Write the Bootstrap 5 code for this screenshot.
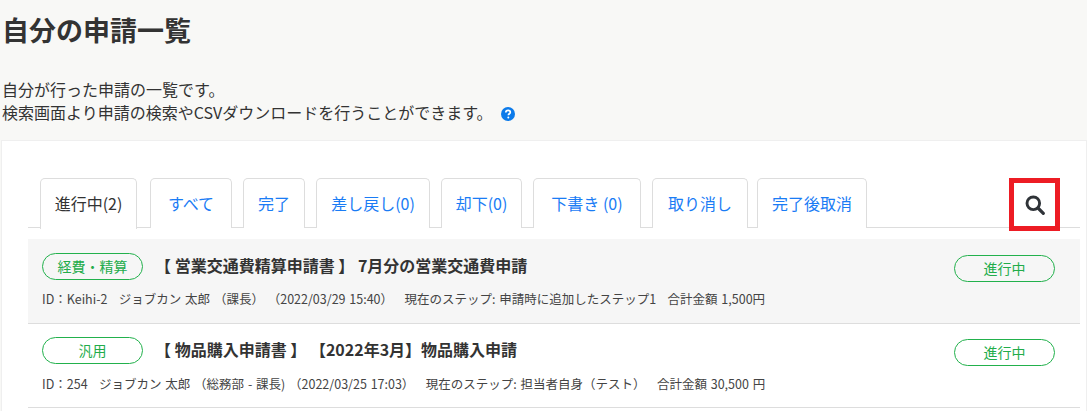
<!DOCTYPE html>
<html lang="ja">
<head>
<meta charset="UTF-8">
<meta name="viewport" content="width=device-width, initial-scale=1">
<link rel="stylesheet" href="https://cdn.jsdelivr.net/npm/bootstrap@5.3.0/dist/css/bootstrap.min.css">
<style>
    body {
        background: #f8f8f6;
        color: #333;
        font-family: "Noto Sans CJK JP", "Noto Sans", sans-serif;
        font-size: 16px;
        text-spacing-trim: space-all;
        overflow: hidden;
    }
    .page-title { font-size: 27px; font-weight: 700; line-height: 38px; margin: 0; padding: 11px 0 0 2px; }
    .page-desc { line-height: 23px; margin: 0; padding: 29px 0 16px 2px; }
    .help-icon { margin-left: 5px; vertical-align: -2px; }
    .panel { background: #fff; border: 1px solid #efefef; border-bottom: 0; margin-left: 1px; height: 271px; padding: 37px 6px 0 26px; }
    .tab-row { position: relative; border-bottom: 1px solid #ddd; height: 50px; padding-left: 12px; gap: 11px; }
    .tab-item {
        display: block; height: 50px; line-height: 48px; text-align: center;
        border: 1px solid #ddd; border-bottom: 0; border-radius: 5px 5px 0 0;
        background: #fff; color: #1a7cf5; text-decoration: none;
    }
    .tab-item.is-current { color: #333; height: 51px; position: relative; margin-bottom: -1px; }
    .t1 { width: 97px; margin-right: 2px; } .t2 { width: 82px; } .t3 { width: 62px; } .t4 { width: 114px; }
    .t5 { width: 81px; } .t6 { width: 108px; } .t7 { width: 96px; } .t8 { width: 110px; margin-left: -2px; }
    .search-box {
        position: absolute; right: 20px; top: 0; width: 51px; height: 53px;
        border: 5px solid #ed1c24; background: #fff;
    }
    .req-list { margin-top: 11px; }
    .req-row { height: 84px; border-bottom: 1px solid #ddd; padding: 13px 25px 0 14px; }
    .req-row.is-shaded { height: 85px; padding-top: 14px; background: #f6f6f6; }
    .pill {
        display: block; height: 27px; line-height: 24px; text-align: center;
        border: 1px solid #22b14c; border-radius: 14px; font-size: 14px; color: #22ac4a;
        flex: none;
    }
    .type-pill { width: 101px; margin-right: 12px; }
    .status-pill { width: 101px; margin-left: auto; margin-top: 2px; }
    .req-title { font-size: 16px; font-weight: 700; line-height: 24px; color: #333; }
    .req-meta { font-size: 12.5px; line-height: 18px; margin-top: 9px; color: #444; white-space: pre; word-spacing: 1px; }
    .is-shaded .req-meta { margin-top: 8px; }
</style>
<title>自分の申請一覧</title>
</head>
<body>

<h1 class="page-title">自分の申請一覧</h1>
<p class="page-desc">自分が行った申請の一覧です。<br>検索画面より申請の検索やCSVダウンロードを行うことができます。
    <svg class="help-icon" width="14" height="14" viewBox="0 0 14 14"><circle cx="7" cy="7" r="7" fill="#0d7bea"/><path d="M4.8 5.4c0-1.3 1-2.1 2.3-2.1s2.2.8 2.2 1.9c0 1.5-1.9 1.6-1.9 3" fill="none" stroke="#fff" stroke-width="1.7"/><circle cx="7.3" cy="10.5" r="1" fill="#fff"/></svg>
</p>

<div class="panel">
    <div class="tab-row d-flex">
        <a class="tab-item t1 is-current" href="#">進行中(2)</a>
        <a class="tab-item t2" href="#">すべて</a>
        <a class="tab-item t3" href="#">完了</a>
        <a class="tab-item t4" href="#">差し戻し(0)</a>
        <a class="tab-item t5" href="#">却下(0)</a>
        <a class="tab-item t6" href="#">下書き (0)</a>
        <a class="tab-item t7" href="#">取り消し</a>
        <a class="tab-item t8" href="#">完了後取消</a>
        <a class="search-box d-flex align-items-center justify-content-center" href="#">
            <svg width="20" height="20" viewBox="0 0 20 20"><circle cx="8.3" cy="8.3" r="6.3" fill="none" stroke="#2f3338" stroke-width="2.9"/><path d="M13 13l5.3 5.3" stroke="#2f3338" stroke-width="3.2" stroke-linecap="round"/></svg>
        </a>
    </div>

    <div class="req-list">
        <div class="req-row is-shaded">
            <div class="d-flex">
                <span class="pill type-pill">経費・精算</span>
                <span class="req-title">【 営業交通費精算申請書 】 7月分の営業交通費申請</span>
                <span class="pill status-pill">進行中</span>
            </div>
            <div class="req-meta">ID：Keihi-2   ジョブカン 太郎 （課長） （2022/03/29 15:40）   現在のステップ: 申請時に追加したステップ1   合計金額 1,500円</div>
        </div>
        <div class="req-row">
            <div class="d-flex">
                <span class="pill type-pill">汎用</span>
                <span class="req-title">【 物品購入申請書 】 【2022年3月】物品購入申請</span>
                <span class="pill status-pill">進行中</span>
            </div>
            <div class="req-meta">ID：254   ジョブカン 太郎 （総務部 - 課長) （2022/03/25 17:03）   現在のステップ: 担当者自身（テスト）   合計金額 30,500 円</div>
        </div>
    </div>
</div>

</body>
</html>
